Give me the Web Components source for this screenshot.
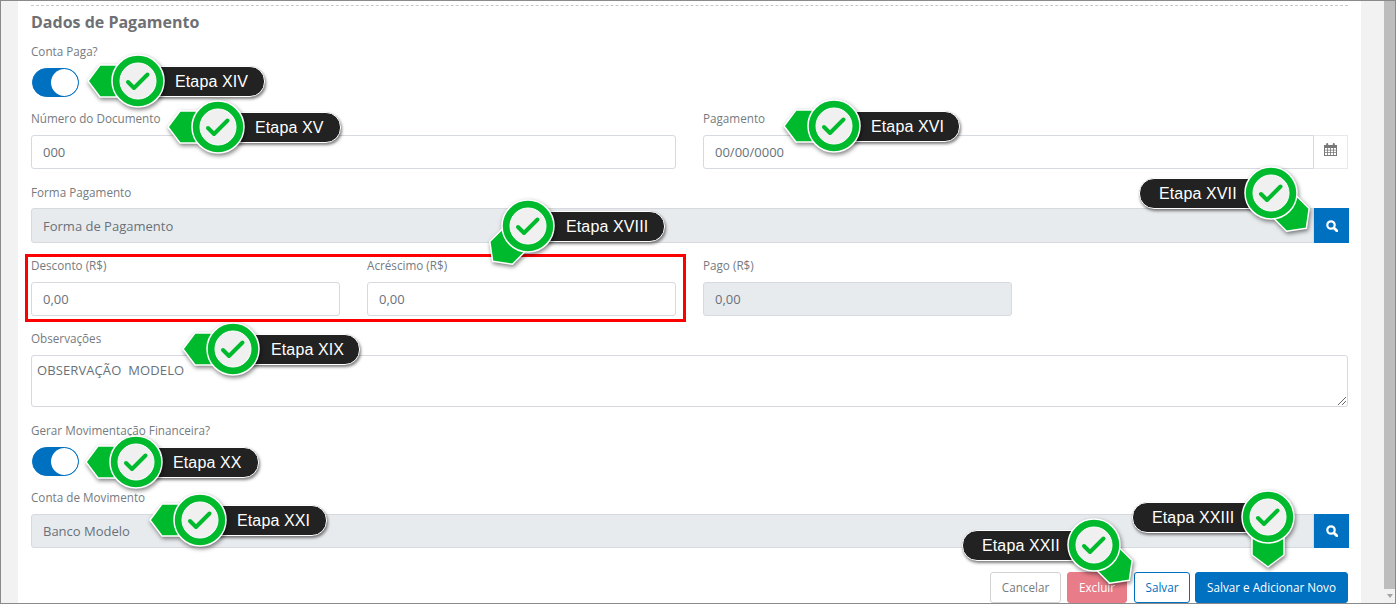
<!DOCTYPE html>
<html lang="pt-BR">
<head>
<meta charset="utf-8">
<title>Dados de Pagamento</title>
<style>
  html, body { margin: 0; padding: 0; height: 100%; overflow: hidden; background: #fff; }
  body { font-family: "Open Sans", "Liberation Sans", sans-serif; }
</style>
</head>
<body>

<app-frame>
  <pay-section heading="Dados de Pagamento">
    <form-field label="Conta Paga?" switch style="--lift:1px"><toggle-switch></toggle-switch></form-field>

    <form-row style="--lift:-1px">
      <form-field label="Número do Documento"><text-box value="000"></text-box></form-field>
      <form-field label="Pagamento"><text-box value="00/00/0000" addon="calendar"></text-box></form-field>
    </form-row>

    <form-field label="Forma Pagamento" class="gap16"><text-box value="Forma de Pagamento" disabled addon="search" tall></text-box></form-field>

    <form-row class="gap16" style="--lift:-1px">
      <form-row inner>
        <form-field label="Desconto (R$)"><text-box value="0,00"></text-box></form-field>
        <form-field label="Acréscimo (R$)"><text-box value="0,00"></text-box></form-field>
      </form-row>
      <form-row inner>
        <form-field label="Pago (R$)"><text-box value="0,00" disabled></text-box></form-field>
        <span></span>
      </form-row>
    </form-row>

    <form-field label="Observações" class="gap16" style="--lift:-1px"><text-area-box value="OBSERVAÇÃO  MODELO"></text-area-box></form-field>

    <form-field label="Gerar Movimentação Financeira?" switch style="--lift:1px"><toggle-switch></toggle-switch></form-field>

    <form-field label="Conta de Movimento" style="--lift:-1px"><text-box value="Banco Modelo" disabled addon="search"></text-box></form-field>

    <button-bar>
      <action-button variant="cancel">Cancelar</action-button>
      <action-button variant="danger">Excluir</action-button>
      <action-button variant="outline">Salvar</action-button>
      <action-button variant="primary">Salvar e Adicionar Novo</action-button>
    </button-bar>
  </pay-section>

  <!-- anotações por cima do formulário -->
  <red-mark slot="overlay" x="25" y="254" w="661" h="68"></red-mark>
  <step-pin slot="overlay" cx="138" cy="81" dir="left" side="right" gap="36" end="265">Etapa XIV</step-pin>
  <step-pin slot="overlay" cx="218" cy="127" dir="left" side="right" gap="36" end="341">Etapa XV</step-pin>
  <step-pin slot="overlay" cx="834" cy="126" dir="left" side="right" gap="36" end="960">Etapa XVI</step-pin>
  <step-pin slot="overlay" cx="1271" cy="193" dir="downright" side="left" gap="33" end="1139">Etapa XVII</step-pin>
  <step-pin slot="overlay" cx="528" cy="226" dir="downleft" side="right" gap="37" end="665">Etapa XVIII</step-pin>
  <step-pin slot="overlay" cx="233" cy="349" dir="left" side="right" gap="37" end="360">Etapa XIX</step-pin>
  <step-pin slot="overlay" cx="136" cy="462" dir="left" side="right" gap="36" end="259">Etapa XX</step-pin>
  <step-pin slot="overlay" cx="200" cy="520" dir="left" side="right" gap="36" end="327">Etapa XXI</step-pin>
  <step-pin slot="overlay" cx="1268" cy="517" dir="down" side="left" gap="35" end="1132">Etapa XXIII</step-pin>
  <step-pin slot="overlay" cx="1094" cy="545" dir="downright" side="left" gap="34" end="962">Etapa XXII</step-pin>
</app-frame>

<script>
const FONT = '"Open Sans", "Liberation Sans", sans-serif';

class AppFrame extends HTMLElement {
  constructor(){
    super();
    this.attachShadow({mode:"open"});
    this.shadowRoot.innerHTML = `
      <style>
        :host { display: block; position: relative; box-sizing: border-box; width: 1396px; height: 604px; border: 1px solid #8a8a8a; overflow: hidden; background: #f2f2f2; }
        .page { display: flex; height: 100%; }
        .gutter { width: 17px; flex: none; }
        .gutter.right { width: 23px; }
        .card { flex: 1; min-width: 0; background: #fff; }
        .bar { width: 11px; flex: none; display: flex; flex-direction: column; background: #bdbdbd; }
        .bar i { flex: 1; }
        .bar .end { flex: none; height: 14px; background: #f1f1f1; display: flex; align-items: center; justify-content: center; }
        .bar .end b { width: 0; height: 0; border: 3.5px solid transparent; border-top: 4px solid #a3a3a3; border-bottom: 0; }
        .overlay { position: absolute; left: -1px; top: -1px; width: 1396px; height: 604px; }
      </style>
      <div class="page">
        <div class="gutter"></div>
        <div class="card"><slot></slot></div>
        <div class="gutter right"></div>
        <div class="bar"><i></i><div class="end"><b></b></div></div>
      </div>
      <div class="overlay"><slot name="overlay"></slot></div>
    `;
  }
}

class PaySection extends HTMLElement {
  constructor(){
    super();
    this.attachShadow({mode:"open"});
  }
  connectedCallback(){
    this.shadowRoot.innerHTML = `
      <style>
        :host { display: block; padding: 4px 13px 0; font-family: ${FONT}; }
        .line { border-top: 1px dashed #c8c8c8; }
        h2 { margin: 6px 0 11px; font-size: 16px; line-height: 20px; font-weight: 700; color: #6e7073; }
        .rows { display: flex; flex-direction: column; gap: 15px; }
        ::slotted(.gap16) { margin-top: 1px; }
      </style>
      <div class="line"></div>
      <h2>${this.getAttribute("heading")}</h2>
      <div class="rows"><slot></slot></div>
    `;
  }
}

class FormRow extends HTMLElement {
  constructor(){
    super();
    this.attachShadow({mode:"open"});
    this.shadowRoot.innerHTML = `
      <style>
        :host { display: grid; grid-template-columns: 1fr 1fr; column-gap: 27px; }
      </style>
      <slot></slot>
    `;
  }
}

class FormField extends HTMLElement {
  constructor(){
    super();
    this.attachShadow({mode:"open"});
  }
  connectedCallback(){
    const gap = this.hasAttribute("switch") ? 11 : 9;
    this.shadowRoot.innerHTML = `
      <style>
        :host { display: block; min-width: 0; }
        label { display: block; position: relative; top: var(--lift, 0px); font-size: 11.7px; line-height: 14px; color: #767b80; margin-bottom: ${gap}px; }
      </style>
      <label>${this.getAttribute("label")}</label>
      <slot></slot>
    `;
  }
}

class ToggleSwitch extends HTMLElement {
  constructor(){
    super();
    this.attachShadow({mode:"open"});
    this.shadowRoot.innerHTML = `
      <style>
        :host { display: flex; justify-content: flex-end; box-sizing: border-box; width: 47px; height: 29px; margin-left: 1px; border: 1px solid #0070c0; border-radius: 15px; background: #0070c0; overflow: hidden; }
        i { display: block; width: 27px; height: 27px; border-radius: 50%; background: #fff; }
      </style>
      <i></i>
    `;
  }
}

const ICONS = {
  calendar: `<svg width="13" height="13" viewBox="0 0 13 13" fill="#787878"><path d="M0 2h2.2V1a1 1 0 0 1 2 0v1h4.6V1a1 1 0 0 1 2 0v1H13v11H0z"/><path fill="#fff" d="M1 5h2.2v1.7H1zM4 5h2.1v1.7H4zM6.9 5H9v1.7H6.9zM9.8 5H12v1.7H9.8zM1 7.5h2.2v1.7H1zM4 7.5h2.1v1.7H4zM6.9 7.5H9v1.7H6.9zM9.8 7.5H12v1.7H9.8zM1 10h2.2v2H1zM4 10h2.1v2H4zM6.9 10H9v2H6.9zM9.8 10H12v2H9.8z"/></svg>`,
  search: `<svg width="12" height="12" viewBox="0 0 12 12" fill="none" stroke="#fff"><circle cx="5" cy="5" r="3.7" stroke-width="2.2"/><path d="M8 8L10.8 10.8" stroke-width="2.8" stroke-linecap="round"/></svg>`
};

class TextBox extends HTMLElement {
  constructor(){
    super();
    this.attachShadow({mode:"open"});
  }
  connectedCallback(){
    const addon = this.getAttribute("addon");
    const h = this.hasAttribute("tall") ? 35 : 34;
    const off = this.hasAttribute("disabled");
    this.shadowRoot.innerHTML = `
      <style>
        :host { display: flex; height: ${h}px; font-size: 13px; color: #68717a; }
        .box { flex: 1; min-width: 0; box-sizing: border-box; display: flex; align-items: center; padding: 0 11px; border: 1px solid #d6d9de; background: ${off ? "#e8ebee" : "#fff"}; border-radius: ${addon ? "3px 0 0 3px" : "3px"}; }
        .addon { flex: none; width: 34px; box-sizing: border-box; display: flex; align-items: center; justify-content: center; }
        .addon.calendar { background: #fff; border: 1px solid #e6e8ec; border-left: 0; padding-bottom: 5px; }
        .addon.search { width: 35px; margin-right: -1px; background: #0070c0; }
      </style>
      <div class="box">${this.getAttribute("value")}</div>
      ${addon ? `<div class="addon ${addon}">${ICONS[addon]}</div>` : ""}
    `;
  }
}

class TextAreaBox extends HTMLElement {
  constructor(){
    super();
    this.attachShadow({mode:"open"});
  }
  connectedCallback(){
    this.shadowRoot.innerHTML = `
      <style>
        :host { display: block; position: relative; box-sizing: border-box; height: 52px; padding: 6px 5px; border: 1px solid #d6d9de; border-radius: 3px; background: #fff; font-size: 13px; line-height: 16px; letter-spacing: .1px; color: #68717a; }
        div { white-space: pre-wrap; }
        svg { position: absolute; right: 0; bottom: 0; }
      </style>
      <div>${this.getAttribute("value")}</div>
      <svg width="11" height="11" viewBox="0 0 11 11" stroke="#666" fill="none"><path d="M2 10L10 2M6 10l4-4"/></svg>
    `;
  }
}

class ButtonBar extends HTMLElement {
  constructor(){
    super();
    this.attachShadow({mode:"open"});
    this.shadowRoot.innerHTML = `
      <style>
        :host { display: flex; justify-content: flex-end; margin-top: 9px; }
      </style>
      <slot></slot>
    `;
  }
}

const BUTTONS = {
  cancel: {w: 71, m: 0, css: "color:#7a7a7a;background:#fff;border-color:#d2d2d2"},
  danger: {w: 60, m: 6, css: "color:#fff;background:#e87c88;border-color:#e87c88"},
  outline: {w: 56, m: 7, css: "color:#0070c0;background:#fff;border-color:#0070c0"},
  primary: {w: 153, m: 5, css: "color:#fff;background:#0070c0;border-color:#0070c0"}
};

class ActionButton extends HTMLElement {
  constructor(){
    super();
    this.attachShadow({mode:"open"});
  }
  connectedCallback(){
    const b = BUTTONS[this.getAttribute("variant")];
    this.shadowRoot.innerHTML = `
      <style>
        :host { display: flex; flex: none; box-sizing: border-box; width: ${b.w}px; margin-left: ${b.m}px; height: 31px; padding-bottom: 2px; align-items: center; justify-content: center; border: 1px solid; border-radius: 3px; font-size: 11.7px; font-weight: 500; white-space: nowrap; ${b.css}; }
      </style>
      <slot></slot>
    `;
  }
}

class RedMark extends HTMLElement {
  constructor(){
    super();
    this.attachShadow({mode:"open"});
  }
  connectedCallback(){
    const a = n => this.getAttribute(n) + "px";
    this.shadowRoot.innerHTML = `
      <style>
        :host { display: block; position: absolute; box-sizing: border-box; left: ${a("x")}; top: ${a("y")}; width: ${a("w")}; height: ${a("h")}; border: 3px solid #f00; }
      </style>
    `;
  }
}

// angulo do ponteiro: o desenho base aponta para a esquerda
const PIN_ANGLE = { left: 0, down: -90, downleft: -45, downright: -135 };

class StepPin extends HTMLElement {
  constructor(){
    super();
    this.attachShadow({mode:"open"});
  }
  connectedCallback(){
    const cx = +this.getAttribute("cx");
    const cy = +this.getAttribute("cy");
    const gap = +this.getAttribute("gap");
    const end = +this.getAttribute("end");
    const right = this.getAttribute("side") === "right";
    const pill = right
      ? `left:0;width:${end - cx}px;padding-left:${gap}px;`
      : `right:0;width:${cx - end}px;padding-left:19px;`;
    const angle = PIN_ANGLE[this.getAttribute("dir")];
    this.shadowRoot.innerHTML = `
      <style>
        :host { display: block; position: absolute; left: ${cx}px; top: ${cy}px; width: 0; height: 0; }
        .pill { position: absolute; top: -15px; ${pill} box-sizing: border-box; height: 31px; padding-top: 1px; display: flex; align-items: center; background: #222; border: 1px solid #fff; border-radius: 15px; box-shadow: 1px 2px 3px rgba(0,0,0,.5); font: 16px/1 "Liberation Sans", Arial, sans-serif; letter-spacing: .12px; color: #fff; white-space: nowrap; }
        .pill span { display: block; }
        svg { position: absolute; left: -60px; top: -60px; overflow: visible; filter: drop-shadow(1px 2px 2px rgba(0,0,0,.5)); }
      </style>
      <div class="pill"><span><slot></slot></span></div>
      <svg width="120" height="120" viewBox="-60 -60 120 120">
        <g transform="rotate(${angle})">
          <path d="M-50 0L-38 -16H0V16H-38Z" fill="#00ba2e" stroke="#fff" stroke-width="1.5" stroke-linejoin="round"/>
        </g>
        <circle r="26" fill="#00ba2e" stroke="#fff" stroke-width="1.5"/>
        <circle r="18" fill="#f0f0f0" stroke="#fff" stroke-width="1"/>
        <path d="M-10 1L-4 7L9.5 -6.5" fill="none" stroke="#00ba2e" stroke-width="4" stroke-linecap="round" stroke-linejoin="round"/>
      </svg>
    `;
  }
}

customElements.define("app-frame", AppFrame);
customElements.define("pay-section", PaySection);
customElements.define("form-row", FormRow);
customElements.define("form-field", FormField);
customElements.define("toggle-switch", ToggleSwitch);
customElements.define("text-box", TextBox);
customElements.define("text-area-box", TextAreaBox);
customElements.define("button-bar", ButtonBar);
customElements.define("action-button", ActionButton);
customElements.define("red-mark", RedMark);
customElements.define("step-pin", StepPin);
</script>
</body>
</html>
